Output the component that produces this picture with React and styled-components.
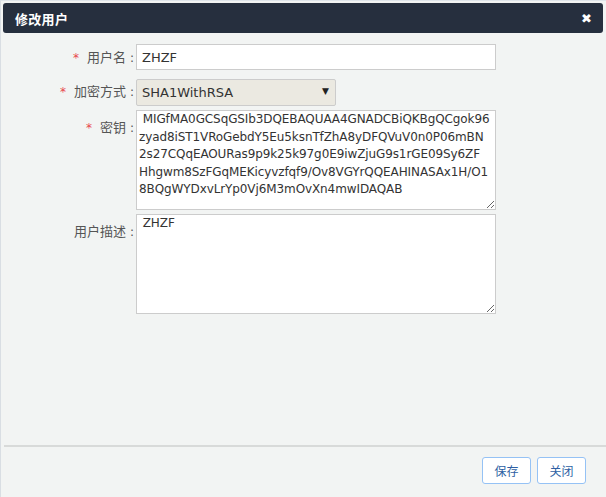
import React, { useState } from "react";
import styled, { createGlobalStyle } from "styled-components";

const GlobalStyle = createGlobalStyle`
	html, body {
		margin: 0;
		padding: 0;
		background: #f2f4f3;
	}
	* {
		box-sizing: border-box;
	}
`;

const KEY_TEXT =
	" MIGfMA0GCSqGSIb3DQEBAQUAA4GNADCBiQKBgQCgok96\nzyad8iST1VRoGebdY5Eu5ksnTfZhA8yDFQVuV0n0P06mBN\n2s27CQqEAOURas9p9k25k97g0E9iwZjuG9s1rGE09Sy6ZF\nHhgwm8SzFGqMEKicyvzfqf9/Ov8VGYrQQEAHINASAx1H/O1\n8BQgWYDxvLrYp0Vj6M3mOvXn4mwIDAQAB";

export default function App() {
	const [name, setName] = useState("ZHZF");
	const [algo, setAlgo] = useState("SHA1WithRSA");
	const [key, setKey] = useState(KEY_TEXT);
	const [desc, setDesc] = useState(" ZHZF");

	return (
		<Frame>
			<GlobalStyle />
			<Header>
				<Title>修改用户</Title>
				<Close>✖</Close>
			</Header>
			<Body>
				<Form>
					<Label required>
						用户名<Colon>:</Colon>
					</Label>
					<Input value={name} onChange={(e) => setName(e.target.value)} />

					<Label required gap={7}>
						加密方式<Colon>:</Colon>
					</Label>
					<SelectWrap gap={7}>
						<Select value={algo} onChange={(e) => setAlgo(e.target.value)}>
							<option>SHA1WithRSA</option>
							<option>MD5WithRSA</option>
						</Select>
						<Arrow>▼</Arrow>
					</SelectWrap>

					<Label required gap={5} top={4}>
						密钥<Colon>:</Colon>
					</Label>
					<TextArea gap={5} value={key} onChange={(e) => setKey(e.target.value)} />

					<Label gap={4} top={4}>
						用户描述<Colon>:</Colon>
					</Label>
					<TextArea gap={4} value={desc} onChange={(e) => setDesc(e.target.value)} />
				</Form>
			</Body>
			<Footer>
				<Button>保存</Button>
				<Button>关闭</Button>
			</Footer>
		</Frame>
	);
}

const Frame = styled.div`
	width: 606px;
	height: 497px;
	display: flex;
	flex-direction: column;
	padding: 3px 3px 0 3px;
	background: #f2f4f3;
	border-left: 1px solid #d9dee3;
	border-top: 1px solid #dfe5ea;
	font-family: "Noto Sans CJK SC", "DejaVu Sans", sans-serif;
`;

const Header = styled.div`
	height: 30px;
	margin-top: -1px;
	margin-left: -1px;
	display: flex;
	align-items: center;
	justify-content: space-between;
	padding: 0 11px 0 12px;
	background: #262f3e;
	border-radius: 3px;
	color: #fff;
`;

const Title = styled.div`
	font-size: 13px;
	font-weight: bold;
	letter-spacing: 0.3px;
`;

const Close = styled.div`
	font-size: 13px;
	font-weight: bold;
	cursor: pointer;
	font-family: "DejaVu Sans", sans-serif;
`;

const Body = styled.div`
	flex: 1;
	padding-top: 11px;
`;

const Form = styled.div`
	display: grid;
	grid-template-columns: 132px 360px;
	align-items: start;
`;

const Label = styled.label`
	margin-top: ${(p) => (p.gap || 0) + (p.top || 0)}px;
	padding-right: 2px;
	line-height: 26px;
	font-size: 13px;
	color: #555;
	text-align: right;
	white-space: nowrap;

	&::before {
		content: ${(p) => (p.required ? '"*"' : '""')};
		color: #e8474d;
		margin-right: 8px;
		font-family: "DejaVu Sans", sans-serif;
		font-size: 12px;
	}
`;

const Colon = styled.span`
	margin-left: 4px;
	font-family: "DejaVu Sans", sans-serif;
	font-size: 12px;
`;

const Input = styled.input`
	height: 26px;
	width: 360px;
	padding: 0 5px;
	border: 1px solid #cccccc;
	background: #fff;
	font-family: "DejaVu Sans", sans-serif;
	font-size: 13px;
	color: #333;
	outline: none;
`;

const SelectWrap = styled.div`
	position: relative;
	margin-top: ${(p) => p.gap || 0}px;
	width: 200px;
	height: 27px;
`;

const Select = styled.select`
	appearance: none;
	width: 100%;
	height: 100%;
	padding: 0 5px;
	border: 1px solid #cccccc;
	border-radius: 2px;
	background: #ebe9e1;
	font-family: "DejaVu Sans", sans-serif;
	font-size: 13px;
	color: #333;
	outline: none;
`;

const Arrow = styled.span`
	position: absolute;
	right: 7px;
	top: 8px;
	font-size: 9px;
	color: #222;
	pointer-events: none;
	font-family: "DejaVu Sans", sans-serif;
`;

const TextArea = styled.textarea`
	margin-top: ${(p) => p.gap || 0}px;
	width: 360px;
	height: 100px;
	padding: 0 2px;
	border: 1px solid #cccccc;
	background: #fff;
	font-family: "DejaVu Sans", sans-serif;
	font-size: 12px;
	letter-spacing: -0.1px;
	line-height: 17.5px;
	color: #333;
	resize: both;
	overflow: hidden;
	outline: none;
`;

const Footer = styled.div`
	height: 52px;
	display: flex;
	justify-content: flex-end;
	align-items: flex-start;
	gap: 6px;
	padding: 10px 20px 0 0;
	margin-right: -3px;
	border-top: 2px solid #d8dad9;
`;

const Button = styled.button`
	width: 49px;
	height: 27px;
	padding: 0;
	border: 1px solid #95c2f5;
	border-radius: 3px;
	background: #fff;
	color: #2e5fa3;
	font-family: "Noto Sans CJK SC", sans-serif;
	font-size: 12px;
	cursor: pointer;
`;
